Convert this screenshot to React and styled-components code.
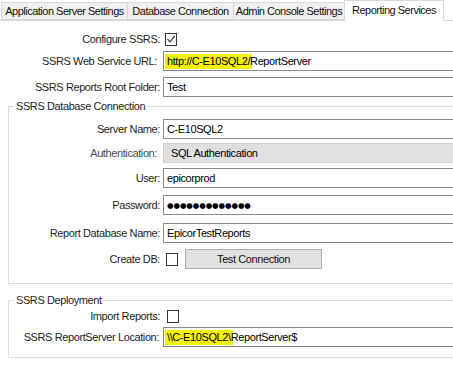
import React from 'react'
import styled, { createGlobalStyle } from 'styled-components'

const Global = createGlobalStyle`
  html, body {
    margin: 0;
    padding: 0;
    background: #fff;
    overflow: hidden;
  }
  body {
    font-family: "Liberation Sans", Arial, sans-serif;
    font-size: 11px;
    letter-spacing: -0.4px;
    color: #1e1e1e;
  }
`;

const Page = styled.div`
  width: 453px;
  height: 371px;
  overflow: hidden;
  background: #fff;
`;

const TabStrip = styled.div`
  display: flex;
  align-items: flex-end;
  height: 21px;
  box-sizing: border-box;
  padding-left: 2px;
  border-bottom: 1px solid #d9d9d9;
`;

const Tab = styled.div`
  width: ${p => p.w}px;
  height: ${p => p.active ? 21 : 18}px;
  margin-bottom: ${p => p.active ? -1 : 0}px;
  margin-left: -1px;
  box-sizing: border-box;
  border: 1px solid #d9d9d9;
  border-bottom: ${p => p.active ? 'none' : '1px solid #d9d9d9'};
  background: ${p => p.active ? '#fff' : '#f0f0f0'};
  color: #111;
  font-size: 11px;
  letter-spacing: -0.5px;
  line-height: ${p => p.active ? 19 : 16}px;
  text-align: center;
  white-space: nowrap;
  overflow: hidden;
  position: relative;
  z-index: ${p => p.active ? 1 : 0};
`;

const Row = styled.div`
  display: grid;
  grid-template-columns: ${p => p.label}px 1fr;
  column-gap: 3px;
  align-items: center;
  height: ${p => p.h || 20}px;
  margin-top: ${p => p.mt || 0}px;
`;

const Label = styled.div`
  text-align: right;
  white-space: nowrap;
  padding-right: ${p => p.inset || 0}px;
  color: ${p => p.dim ? '#4a4a4a' : '#1e1e1e'};
`;

const TextBox = styled.div`
  height: 20px;
  box-sizing: border-box;
  border: 1px solid ${p => p.disabled ? '#cfcfcf' : '#8a8a8a'};
  background: ${p => p.disabled ? '#e0e0e0' : '#fff'};
  margin-right: -20px;
  padding-left: ${p => p.disabled ? 7 : 3}px;
  display: flex;
  align-items: center;
  white-space: nowrap;
  color: #000;
`;

const Mark = styled.span`
  background: #f5f200;
  margin: 0 -2px 0 -2px;
  padding: 1px 2px 2px 2px;
`;

const Dots = styled.span`
  font-family: "DejaVu Sans", sans-serif;
  font-size: 7.5px;
  letter-spacing: -0.1px;
  color: #000;
`;

const Controls = styled.div`
  display: flex;
  align-items: center;
`;

const Check = styled.div`
  width: 12px;
  height: 13px;
  box-sizing: border-box;
  border: 1px solid #333;
  background: #fff;
  margin-left: ${p => p.ml || 3}px;
  display: flex;
  align-items: center;
  justify-content: center;
`;

const Button = styled.div`
  width: 137px;
  height: 20px;
  box-sizing: border-box;
  margin-left: 7px;
  border: 1px solid #adadad;
  background: #e1e1e1;
  color: #111;
  display: flex;
  align-items: center;
  justify-content: center;
`;

const Group = styled.fieldset`
  margin: ${p => p.mt}px -20px 0 8px;
  padding: 0 0 ${p => p.pb}px 0;
  border: 1px solid #dcdcdc;
  min-width: 0;
`;

const Legend = styled.legend`
  margin-left: 5px;
  padding: 0 2px;
  line-height: 14px;
  font-size: 11px;
  color: #1e1e1e;
`;

function CheckBox({ checked, ml }) {
  return (
    <Check ml={ml}>
      {checked && (
        <svg width="10" height="10" viewBox="0 0 10 10">
          <polyline points="1.5,5.2 4,7.8 8.8,1.8" fill="none" stroke="#333" strokeWidth="1.1" />
        </svg>
      )}
    </Check>
  )
}

const tabs = [
  { name: 'Application Server Settings', w: 127 },
  { name: 'Database Connection', w: 107 },
  { name: 'Admin Console Settings', w: 112 },
  { name: 'Reporting Services', w: 100, active: true },
];

export default function App() {
  return (
    <Page>
      <Global />
      <TabStrip>
        {tabs.map(t => (
          <Tab key={t.name} w={t.w} active={t.active}>{t.name}</Tab>
        ))}
      </TabStrip>

      <Row label={160} mt={8}>
        <Label>Configure SSRS:</Label>
        <Controls><CheckBox checked ml={2} /></Controls>
      </Row>
      <Row label={160} mt={2}>
        <Label inset={3}>SSRS Web Service URL:</Label>
        <TextBox><Mark>http://C-E10SQL2/</Mark>ReportServer</TextBox>
      </Row>
      <Row label={160} mt={6}>
        <Label>SSRS Reports Root Folder:</Label>
        <TextBox>Test</TextBox>
      </Row>

      <Group mt={2} pb={14}>
        <Legend>SSRS Database Connection</Legend>
        <Row label={151} mt={6}>
          <Label>Server Name:</Label>
          <TextBox>C-E10SQL2</TextBox>
        </Row>
        <Row label={151} mt={4}>
          <Label dim inset={3}>Authentication:</Label>
          <TextBox disabled>SQL Authentication</TextBox>
        </Row>
        <Row label={151} mt={5}>
          <Label>User:</Label>
          <TextBox>epicorprod</TextBox>
        </Row>
        <Row label={151} mt={7}>
          <Label>Password:</Label>
          <TextBox><Dots>●●●●●●●●●●●●●</Dots></TextBox>
        </Row>
        <Row label={151} mt={8}>
          <Label>Report Database Name:</Label>
          <TextBox>EpicorTestReports</TextBox>
        </Row>
        <Row label={151} mt={6}>
          <Label>Create DB:</Label>
          <Controls>
            <CheckBox />
            <Button>Test Connection</Button>
          </Controls>
        </Row>
      </Group>

      <Group mt={9} pb={10}>
        <Legend>SSRS Deployment</Legend>
        <Row label={151} h={18}>
          <Label>Import Reports:</Label>
          <Controls><CheckBox ml={4} /></Controls>
        </Row>
        <Row label={151} mt={2}>
          <Label inset={1}>SSRS ReportServer Location:</Label>
          <TextBox><Mark>\\C-E10SQL2\</Mark>ReportServer$</TextBox>
        </Row>
      </Group>
    </Page>
  )
}
